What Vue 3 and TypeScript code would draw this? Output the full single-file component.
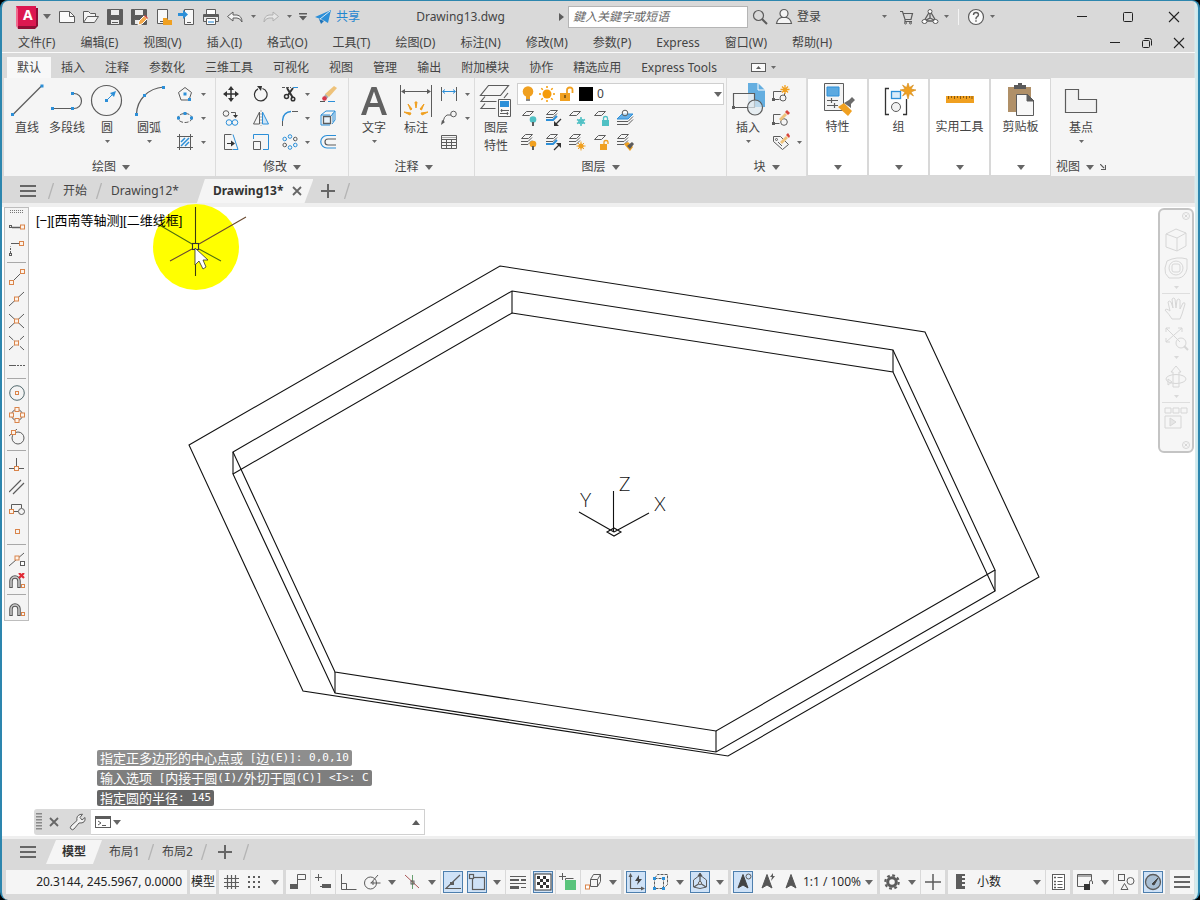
<script setup lang="ts">
import { h, ref } from 'vue'

type IconDef = [number, number, string]

const B = 'stroke="#2c8fd8"'
const bf = 'fill="#2c8fd8" stroke="none"'
const of = 'fill="#f0a020" stroke="none"'
const gf = 'fill="#5c5c5c" stroke="none"'
const tf = 'fill="#4fc0c4" stroke="none"'
const O = 'stroke="#d9844a"'
const sq = (x: number, y: number) => `<rect x="${x - 1.5}" y="${y - 1.5}" width="3" height="3" ${bf}/>`
const osq = (x: number, y: number) => `<rect x="${x - 2}" y="${y - 2}" width="4" height="4" fill="#fdf3ea" ${O}/>`
const sheet = (x: number, y: number, fill = '#f5f5f5', stroke = '#5c5c5c') =>
  `<path d="M${x + 4} ${y}h7l-4 4h-7z" fill="${fill}" stroke="${stroke}"/>`
const stack = sheet(1.5, 1.5) + '<path d="M1 8.500h7l4-4M1 11.500h7l4-4"/>'
const blueStack = sheet(2.5, 1.5) + '<path d="M2 8.500h7l4-4"/><path d="M2 11h7l4-4" stroke="#2c8fd8" stroke-width="2"/>'
const person = '<path d="M9 1.500l5 13.500L9 12l-5 3z" '

const icons: Record<string, IconDef> = {
  caret: [5, 3, '<path d="M0 0h5L2.500 3z" fill="#6a6a6a" stroke="none"/>'],
  caretL: [8, 5, '<path d="M0 0h8L4 5z" fill="#666" stroke="none"/>'],
  caretR: [5, 8, `<path d="M0 0v8l5-4z" ${gf}/>`],
  caretUp: [8, 5, `<path d="M0 5h8L4 0z" ${gf}/>`],
  slash: [8, 16, '<path d="M1.500 16L6.500 0" stroke="#b4b4b4" stroke-width="1.300"/>'],
  logo: [24, 24, '<path d="M3 3h20v18l-3 3H3z" fill="#8f0e35" stroke="none"/><path d="M1 1h20v20H1z" fill="#dc1750" stroke="none"/><path d="M1 1l2 3v20l-2-3z" fill="#f06a8e" stroke="none"/><text x="8" y="15" font-family="Noto Sans, sans-serif" font-size="14" font-weight="700" fill="#fff" stroke="none">A</text>'],
  newFile: [18, 18, '<path d="M1.500 3.500h10l5 5v6h-15z" fill="#fafafa"/><path d="M11.500 3.500v5h5"/>'],
  open: [18, 18, '<path d="M1.500 14.500v-11h5l2 2h5v3M1.500 14.500l4-6h11l-4 6z" fill="#f4f4f4"/>'],
  save: [18, 18, '<path d="M1.500 1.500h15v15h-15z" fill="#5c5c5c"/><path d="M4.500 1.500h9v6h-9zM4.500 11.500h9v5h-9z" fill="#ececec"/><path d="M6 14.500h6"/>'],
  saveAs: [18, 18, '<path d="M1.500 1.500h15v15h-15z" fill="#5c5c5c"/><path d="M4.500 1.500h9v6h-9zM4.500 11.500h9v5h-9z" fill="#ececec"/><path d="M8 17l1-4 5-5 3 3-5 5z" fill="#f5a94a" stroke="#fff"/><path d="M14 8l3 3 1-1-3-3z" fill="#d84a3a" stroke="none"/>'],
  openWeb: [18, 18, `<path d="M3.500 1.500h10v14h-10z" fill="#f8f8f8"/><path d="M6 13.500h3"/><path d="M9 17v-7h4l1 2h4v5z" ${of}/>`],
  saveWeb: [18, 18, `<path d="M6.500 1.500h9v15h-9z" fill="#f8f8f8"/><path d="M9 14.500h4"/><path d="M0 5h5V2l5 4.500L5 11V8H0z" ${bf}/>`],
  print: [18, 18, `<path d="M4.500 6V1.500h9V6" fill="#fff"/><path d="M1.500 6.500h15v7h-15z" fill="#e9e9e9"/><path d="M4.500 10.500h9v6h-9z" fill="#fff"/><path d="M6 13h6v2H6z" fill="#8cc0e8" stroke="none"/><path d="M2 8h14" stroke-width="2"/>`],
  undo: [18, 18, '<path d="M1.500 8.500L7 4v3h4q5 1 5 7q-2-4-5-4H7v3z" fill="#f4f4f4"/>'],
  redo: [18, 18, '<path d="M16.500 8.500L11 4v3H7q-5 1-5 7q2-4 5-4h4v3z" fill="#e6e6e6" stroke="#b0b0b0"/>'],
  custom: [8, 8, `<path d="M0 0h8v1.500H0zM0 3h8L4 7.500z" ${gf}/>`],
  share: [16, 16, `<path d="M0 8L16 1 13 14 8 11z" ${bf}/><path d="M4 10l2 5 3-3z" fill="#1c72b8" stroke="none"/><path d="M5 10L15 2" stroke="#d9eaf6"/>`],
  search: [18, 18, '<circle cx="7.500" cy="7.500" r="5" stroke-width="1.200"/><path d="M11 11l5 5" stroke-width="2"/>'],
  user: [18, 18, '<circle cx="9" cy="5.500" r="4" fill="#f4f4f4" stroke-width="1.200"/><path d="M1.500 15.500q1-5 5-6h5q4 1 5 6z" fill="#f4f4f4" stroke-width="1.200"/>'],
  cart: [18, 18, '<path d="M3 3.500h2.500l2.500 8h6l1.500-6H6M8 11.500v2h7" stroke-width="1.200"/><circle cx="8.500" cy="15" r="1"/><circle cx="13.500" cy="15" r="1"/>'],
  hub: [18, 18, '<path d="M9 3L3 13h12zM9 3v7l-6 3M9 10l6 3" stroke-width="1.300"/><circle cx="9" cy="3.500" r="2" fill="#fff"/><ellipse cx="3.500" cy="13.500" rx="2.500" ry="2" fill="#fff"/><ellipse cx="14.500" cy="13.500" rx="2.500" ry="2" fill="#fff"/>'],
  help: [18, 18, '<circle cx="9" cy="9" r="7.500" fill="#fafafa" stroke-width="1.200"/><path d="M6.500 7q0-2.500 2.500-2.500t2.500 2.200q0 1.300-1.500 2.100-1 .6-1 2v.4M9 12.300v1.400" stroke-width="1.400"/>'],
  min: [12, 12, '<path d="M1 5.500h10" stroke="#222"/>'],
  max: [12, 12, '<rect x="1.500" y="1.500" width="9" height="9" rx="1" stroke="#222"/>'],
  restore: [12, 12, '<rect x="1.500" y="3.500" width="7" height="7" rx="1" stroke="#222"/><path d="M3.500 1.500h5q2 0 2 2v5" stroke="#222"/>'],
  close: [12, 12, '<path d="M1 1l10 10M11 1L1 11" stroke="#222" stroke-width="1.100"/>'],
  ribbonMode: [16, 10, `<rect x=".5" y=".5" width="14" height="8" fill="#fafafa"/><path d="M5 6h5L7.500 3z" ${gf}/>`],
  line: [36, 36, `<path d="M3.500 33L32.500 4" stroke-width="1.200"/>${sq(3.5, 32.5)}${sq(33, 4)}`],
  pline: [36, 36, `<path d="M3.500 26.500h21.500a7.500 7.500 0 0 0 0-15h-2" stroke-width="1.200"/>${sq(3.5, 26.5)}${sq(23.5, 26.5)}${sq(23.5, 11.5)}`],
  circle: [36, 36, `<circle cx="17.500" cy="18.500" r="15" stroke-width="1.200"/>${sq(17.5, 18.5)}<path d="M18 18l6-6" ${B}/><path d="M27 9l-2 6-4-4z" ${bf}/>`],
  arc: [36, 36, `<path d="M5.500 32Q6 21 13.500 13.500 21 6 32.500 5" stroke-width="1.200"/>${sq(5.5, 32.5)}${sq(13.5, 13.5)}${sq(32.5, 5.5)}`],
  polygon: [16, 16, `<path d="M8 1.500l6.500 5-2.500 7.500H4L1.500 6.500z"/>${sq(8, 8)}${sq(12.5, 13.5)}`],
  ellipse: [16, 16, `<ellipse cx="8" cy="8" rx="7" ry="4.500" stroke-dasharray="4 1.500"/>${sq(1.5, 8)}${sq(8, 3.5)}${sq(14.5, 8)}`],
  hatch: [16, 16, `<path d="M2.500 0v16M13.500 0v16M0 2.500h16M0 13.500h16"/><path d="M4 8l4-4M4 12l8-8M8 12l4-4" ${B} stroke-width="1.500"/>`],
  move: [16, 16, '<path d="M8 2v12M2 8h12" stroke="#333" stroke-width="1.500"/><path d="M8 0l3 4H5zM8 16l3-4H5zM0 8l4-3v6zM16 8l-4-3v6z" fill="#333" stroke="none"/>'],
  rotate: [16, 16, '<path d="M9.500 2.500a6.300 6.300 0 1 1-4.500.4" stroke="#333" stroke-width="1.200"/><path d="M4 0h5L8 5z" fill="#333" stroke="none"/>'],
  trim: [16, 16, '<path d="M0 1.500h9" stroke-dasharray="3 1"/><path d="M11 1.500h5" stroke="#2c8fd8"/><path d="M5 2l6 10M11 2L6 9" stroke="#333" stroke-width="2"/><circle cx="4.500" cy="10.500" r="2" stroke="#333" stroke-width="1.500"/><circle cx="11" cy="13" r="1.800" stroke="#333" stroke-width="1.500"/>'],
  erase: [18, 16, '<path d="M15 0l3 2-8 9-4-3z" fill="#eec27a" stroke="none"/><path d="M6.500 8l3 3-2 2-3-2z" fill="#aaa" stroke="none"/><circle cx="5.500" cy="12.500" r="2.300" fill="#d8364a" stroke="none"/><path d="M1 15.500h5" stroke="#555"/><path d="M9 15.500h7" stroke="#2c8fd8"/>'],
  copy: [18, 16, `<circle cx="4" cy="3.500" r="2.800"/><path d="M9 2.500h4.500v4"/><path d="M11 5h5l-2.500 3z" fill="#333" stroke="none"/><circle cx="7" cy="12.500" r="2.800" ${B}/><circle cx="13" cy="12.500" r="2.800" ${B}/>`],
  mirror: [16, 16, `<path d="M6.500 2v12h-6z"/><path d="M9.500 2v12h6z" fill="#cfe5f6" ${B}/><path d="M8 0v16" stroke="#aaa" stroke-dasharray="2 1"/>`],
  fillet: [16, 16, `<path d="M.5 16V11"/><path d="M.5 11Q1 2 9 1.500" ${B} stroke-width="1.300"/><path d="M10 1.500h6"/>`],
  explode: [18, 16, `<path d="M4.500 6.500h7v7h-7z" fill="#e8f2fa" stroke-width="1.300"/><path d="M2 5l5-4h9v9l-3 4M12 6l4-5M2 5h9M2 5v10h9M14 3v9" ${B}/>`],
  stretch: [18, 16, `<path d="M9.500.5h-7v15h8"/><path d="M11 .5l5 15h-5" ${B}/><path d="M5 9.500h6" stroke="#333"/><path d="M9 6.500v6l4-3z" fill="#333" stroke="none"/>`],
  scale: [16, 16, `<path d="M.5 7.500h7v8h-7z"/><path d="M.5 5V.5h15v15H10" ${B}/>`],
  array: [16, 16, `<circle cx="8" cy="2.500" r="1.800" ${B}/><circle cx="13.300" cy="5" r="1.800"/><circle cx="13.300" cy="11" r="1.800" ${B}/><circle cx="8" cy="13.500" r="1.800" ${B}/><circle cx="2.700" cy="11" r="1.800"/><circle cx="2.700" cy="5" r="1.800" ${B}/>`],
  offset: [18, 16, `<path d="M17 1.500H8a6 6 0 0 0 0 12.500h9" ${B} stroke-width="1.200"/><path d="M17 5H9a2.700 2.700 0 0 0 0 6h8" stroke-width="1.200"/>`],
  text: [36, 36, '<path d="M5 33L15.500 5h5L31 33h-5l-2.700-8H12.500L10 33zM14 21h8L18 9.500z" fill="#616161" stroke="none" fill-rule="evenodd"/>'],
  dimension: [36, 36, `<path d="M2.500 3v32M33.500 3v32M5 9.500h26"/><path d="M3 9.500l4-2.500v5zM33 9.500l-4-2.500v5z" ${gf}/><path d="M17 20l1 6 1-6zM10 22l4 5-1.500 1zM26 22l-4 5 1.500 1zM6 30l7 1-1 2zM30 30l-7 1 1 2z" fill="#f0a020" stroke="#f0a020"/>`],
  linear: [16, 16, `<path d="M.5 1v14M15.500 1v14"/><path d="M2 5.500h12M4 3.500l-2.500 2L4 7.500M12 3.500l2.500 2-2.500 2" ${B}/>`],
  leader: [16, 16, `<path d="M2 12q1-6 4-7h4"/><circle cx="12.500" cy="4" r="2.800"/><path d="M0 15l1-5 3 2z" ${gf}/>`],
  table: [16, 14, '<path d="M.5.5h15v13H.5zM.5 4.500h15M.5 7.500h15M.5 10.500h15M5.500 4v9.500M10.500 4v9.500"/><path d="M1 2.500h14" stroke="#aaa"/>'],
  layers: [36, 36, `<path d="M10.500 3.500h20l-8 10h-20z" stroke-width="1.200"/><path d="M7 19.500H3l4-5M7 26.500H3l4-5M3.500 19.500h15M3.500 26.500h14M26 16l4-5" stroke-width="1.200"/><path d="M20.500 17.500h12v17h-12z" fill="#f8f8f8"/><path d="M22 19h9v6h-9z" ${bf}/><path d="M23 28.500h8M22 31.500h8M24 27l-1 1.500 1 1.500M29 30l1 1.500-1 1.500"/>`],
  bulb: [14, 18, `<circle cx="7" cy="6.500" r="5.300" ${of}/><path d="M5 11h4v3H5z" ${of}/><path d="M5 14h4v2H5z" fill="#888" stroke="none"/>`],
  sun: [16, 16, '<circle cx="8" cy="8" r="4.500" fill="#f59c0a" stroke="none"/><path d="M8 0v2M8 14v2M0 8h2M14 8h2M2.300 2.300l1.500 1.500M12.200 12.200l1.500 1.500M13.700 2.300l-1.500 1.500M3.800 12.200l-1.500 1.500" stroke="#f59c0a" stroke-width="1.500"/>'],
  unlock: [16, 16, '<path d="M1 7h10v8H1z" fill="#f0a020" stroke="none"/><path d="M8 7V4q0-2.500 2.800-2.500T13.500 4v3" stroke="#f0a020" stroke-width="1.800"/><path d="M6 9v3" stroke="#6b4a10" stroke-width="1.500"/>'],
  layOff: [18, 18, `${sheet(2.5, 2.5)}<circle cx="13" cy="10.500" r="3.300" ${tf}/><path d="M12 13h2v4h-2z" ${gf}/>`],
  layIso: [18, 18, `${blueStack}<path d="M17 10l-5 5" stroke="#333" stroke-width="1.300"/><path d="M10 17v-5l5 5z" fill="#333" stroke="none"/>`],
  layFreeze: [18, 18, `${sheet(1.5, 2.5)}<circle cx="13" cy="12.500" r="2.500" stroke="#4fc0c4"/><path d="M13 8v9M9 10.500l8 4M17 10.500l-8 4" stroke="#4fc0c4" stroke-width="1.500"/>`],
  layLock: [18, 18, `${sheet(2.5, 2.5)}<path d="M10 11h7v6h-7z" ${tf}/><path d="M11.500 11v-2q0-1.500 2-1.500t2 1.500v2" stroke="#4fc0c4" stroke-width="1.300"/>`],
  layCurrent: [18, 18, '<path d="M6 5h11l-5 5H1z" fill="#64aee6" stroke="#2c8fd8"/><path d="M1 12.500h11l5-5M1 15.500h11l5-5"/><circle cx="9" cy="4" r="2.800" fill="#fff" fill-opacity=".6"/>'],
  layOn: [18, 18, `${stack}<circle cx="13" cy="11" r="3.300" ${of}/><path d="M12 13h2v4h-2z" ${gf}/>`],
  layUniso: [18, 18, `${blueStack}<path d="M10 17l5-5" stroke="#333" stroke-width="1.300"/><path d="M17 10v5l-5-5z" fill="#333" stroke="none"/>`],
  layThaw: [18, 18, `${stack}<circle cx="13" cy="13" r="2.600" ${of}/><path d="M13 8.500v9M8.500 13h9M10 10l6 6M16 10l-6 6" stroke="#f0a020"/>`],
  layUnlock: [18, 18, `${sheet(2.5, 2.5)}<path d="M8 11h7v6H8z" ${of}/><path d="M12 11v-2q0-1.500 2-1.500t2 1.500v2" stroke="#f0a020" stroke-width="1.300"/>`],
  layMatch: [18, 18, `${stack}<path d="M8 11l4-2 5 5-3 4z" ${of}/><path d="M11 13l5-4 2 2-4 5z" ${gf}/>`],
  insert: [36, 36, `<path d="M18 1h10l7 7v17H18z" fill="#64aee0" stroke="none"/><path d="M28 1v7h7" stroke="#fff"/><path d="M3.500 11.500h21v14h-21z" fill="#f5f5f5" fill-opacity=".85" stroke-width="1.200"/><circle cx="25" cy="25.500" r="7.500" fill="#dfe9f0" fill-opacity=".7" stroke-width="1.200"/><path d="M2 24h3v3H2z" ${gf}/>`],
  blkCreate: [18, 18, `<path d="M1.500 14.500v-8h8M1.500 14.500h6M12.500 8v2"/><circle cx="11" cy="13" r="3"/><path d="M13 0v9M8.500 4.500h9M10 1.500l6 6M16 1.500l-6 6" stroke="#f0a020" stroke-width="1.300"/><path d="M0 13h3v3H0z" ${gf}/>`],
  blkEdit: [18, 18, `<path d="M1.500 14.500v-9h7M1.500 14.500h6"/><circle cx="12" cy="13" r="3.300"/><path d="M7 10l6-6 2 2-6 6z" fill="#eec27a" stroke="none"/><path d="M13 3l2-2 3 3-2 2z" fill="#d8453a" stroke="none"/><path d="M0 13h3v3H0z" ${gf}/>`],
  blkAttr: [18, 18, '<path d="M1.500 3.500h7l8 8-6 5-9-8z" fill="#f5f5f5"/><circle cx="4.500" cy="6.500" r="1"/><path d="M6 9l4 4" /><path d="M8 9l6-6 2 2-6 6z" fill="#eec27a" stroke="none"/><path d="M14 2l2-2 2 3-1 2z" fill="#d8453a" stroke="none"/>'],
  props: [36, 36, `<path d="M4.500 2.500h19v27h-19z" fill="#f4f4f4"/><path d="M7 6h12v9H7z" fill="#5ba9e0" stroke="#2c8fd8"/><path d="M7 19.500h11M7 24.500h11M11.500 17v5M14.500 22v5" stroke-width="1.200"/><path d="M18 26l6-4 8 8-4 5z" ${of}/><path d="M24 22l5-3 3-3 3 3-4 4v4z" fill="#6b6b6b" stroke="none"/>`],
  group: [36, 36, '<path d="M8 7.500H4.500v26H8M22 33.500h3.500V18" stroke-width="1.300" stroke="#333"/><rect x="10.500" y="10.500" width="9" height="7" fill="#d9ecfa" stroke="#2c8fd8" stroke-width="1.300"/><circle cx="15" cy="26" r="4.500" fill="#f2f2f2"/><path d="M27 2l1.500 4.500L32.500 4l-2.500 4 5 1-5 2 2.500 4-4-2.500L27 18l-1.500-5.500-4 2.500 2.500-4-5-2 5-1-2.500-4 4 2.500z" fill="#f0a020" stroke="#d08818" stroke-width=".6"/>'],
  ruler: [36, 36, '<path d="M4 15h28v7H4z" fill="#f0a020" stroke="none"/><path d="M6.500 15v3M9.500 15v2M12.500 15v3M15.500 15v2M18.500 15v3M21.500 15v2M24.500 15v3M27.500 15v2M30 15v3" stroke="#8a5a10"/>'],
  paste: [36, 36, '<path d="M5 6h23v25H5z" fill="#b09068" stroke="none"/><path d="M11 4h4V2h4v2h4v4H11z" fill="#5a5a5a" stroke="none"/><path d="M13.500 13.500h11l6 6v15h-17z" fill="#f8f8f8"/><path d="M24 13v7h7z" fill="#5c5c5c" stroke="#5c5c5c"/>'],
  base: [36, 36, '<path d="M2.500 7.500h13v10h18v13h-31z" fill="#f2f2f2" stroke-width="1.200"/>'],
  launcher: [6, 6, '<path d="M0 0l4 4M5.500 1v4.500H1" stroke-width="1.200"/>'],
  burger: [16, 14, '<path d="M0 2h16M0 7h16M0 12h16" stroke="#666" stroke-width="2"/>'],
  plus: [14, 14, '<path d="M7 0v14M0 7h14" stroke="#666" stroke-width="2"/>'],
  x: [10, 10, '<path d="M1 1l8 8M9 1L1 9" stroke="#666" stroke-width="1.800"/>'],
  sTrack: [16, 16, `<rect x=".5" y="6.500" width="2" height="2"/><path d="M3 8.500h8" stroke-width="1.300"/>${osq(13.5, 8)}`],
  sFrom: [16, 16, `<path d="M1.500 12V5.500" stroke-dasharray="2 1"/><path d="M2 2.500h9"/><rect x=".5" y="12.500" width="2" height="2"/>${osq(12.5, 2.5)}`],
  sEnd: [16, 16, `<path d="M3 13L13 3"/>${osq(2.5, 13.5)}${osq(13.5, 2.5)}`],
  sMid: [16, 16, `<path d="M0 15L15 1"/>${osq(7.5, 8)}`],
  sInt: [16, 16, `<path d="M0 1l15 14M0 15L15 1"/>${osq(7.5, 8)}`],
  sApp: [16, 16, `<path d="M0 1l15 14M0 15L15 1" stroke-dasharray="6 1.500"/>${osq(7.5, 8)}`],
  sExt: [16, 16, '<path d="M0 8.500h7"/><path d="M8 8.500h8" stroke-dasharray="2 1"/>'],
  sCen: [16, 16, `<circle cx="8" cy="8" r="7.300" stroke="#52696d"/><rect x="6.500" y="6.500" width="3" height="3" ${O}/>`],
  sQua: [16, 16, `<circle cx="8" cy="8" r="5.500"/>${osq(8, 2.5)}${osq(2.5, 8)}${osq(13.5, 8)}${osq(8, 13.5)}`],
  sTan: [16, 16, `<path d="M0 7L8 0"/><circle cx="9" cy="9" r="6"/>${osq(4.5, 3.5)}`],
  sPer: [16, 16, `<path d="M7.500 1v10M0 11.500h15"/>${osq(7.5, 11.5)}`],
  sPar: [16, 16, '<path d="M0 13L12 1M4 15L15 4" stroke-width="1.200"/>'],
  sIns: [16, 16, `<path d="M2.500 9V3.500h10V7M4 10.500h5"/><circle cx="12.500" cy="10.500" r="3"/>${osq(2.5, 10.5)}`],
  sNode: [16, 16, `<rect x="6.500" y="6.500" width="4" height="4" ${O}/>`],
  sNear: [16, 16, `<path d="M0 15L15 2"/><rect x="11.500" y="10.500" width="4" height="4" fill="#fff"/>${osq(8, 7)}`],
  sNone: [16, 16, '<path d="M2 15V8a4 4 0 0 1 8 0v7" stroke="#555" stroke-width="3.500"/><path d="M2 14V8a4 4 0 0 1 8 0v6" stroke="#ccc" stroke-width="1.500"/><path d="M10 0l5 5M15 0l-5 5" stroke="#e02a35" stroke-width="2.200"/><rect x="12.500" y="11.500" width="3" height="3" stroke="#d9844a"/>'],
  sOpt: [16, 16, '<path d="M2 15V8a4 4 0 0 1 8 0v7" stroke="#555" stroke-width="3.500"/><path d="M2 14V8a4 4 0 0 1 8 0v6" stroke="#ccc" stroke-width="1.500"/><rect x="12.500" y="11.500" width="3" height="3" stroke="#d9844a"/>'],
  nCube: [24, 24, '<path d="M12 1l10 4v13l-9 5-11-4V6zM2 6l11 4 9-5M13 10v13"/>'],
  nWheel: [24, 24, '<path d="M3 5q10-5 20-2v10q-2 8-8 9H5Q0 18 1 12z"/><circle cx="12" cy="12" r="7"/><rect x="8" y="8" width="8" height="8" rx="2"/>'],
  nHand: [24, 24, '<path d="M8 22q-3-5-7-9 1-2 5 1l-2-9q1-2 3 0l2 6-1-9q2-2 3 0l1 9 1-8q2-2 3 0v9l3-6q2-1 2 1l-3 10-2 5z"/>'],
  nZoom: [26, 26, '<path d="M3 3l14 14M19 3L3 17M3 7V3h4M15 3h4v4M3 13v4h4"/><circle cx="18" cy="18" r="5"/><path d="M21 21l4 4" stroke-width="2"/>'],
  nOrbit: [24, 24, '<ellipse cx="12" cy="14" rx="10" ry="4.500"/><path d="M9 22V7H7l5-6 5 6h-2v15zM4 14l4 3-4 3z"/>'],
  nMotion: [24, 24, '<path d="M1 2h6v5H1zM9 2h6v5H9zM17 2h6v5h-6zM1 10h16v12H1z"/><path d="M6 12v8l6-4z" fill="#aaa"/>'],
  nClose: [8, 8, '<circle cx="4" cy="4" r="3.500"/><path d="M2.500 2.500l3 3M5.500 2.500l-3 3"/>'],
  wrench: [18, 18, '<path d="M2 16q-1.500-1 0-3l6-5.500Q7 3 11 1.500l2.500-.3L11 4.500l2 2.500 3-2.500q1 6-6 5.500L5 16q-1.500 1.500-3 0z" fill="#f2f2f2"/>'],
  prompt: [17, 13, `<rect x=".5" y=".5" width="15" height="11" fill="#fff"/><path d="M0 0h16v3H0z" ${gf}/><path d="M3 5l3 2-3 2M7 9.500h4"/>`],
  grip: [6, 18, '<path d="M1 0v18M5 0v18M3 0v18" stroke="#555" stroke-width="1.200" stroke-dasharray="1.500 1.500"/>'],
  gripH: [14, 4, '<path d="M0 .5h14M0 2.500h14" stroke="#777" stroke-dasharray="1 1"/>'],
  grid: [18, 18, '<path d="M5.500 2v14M9.500 2v14M13.500 2v14M2 5.500h15M2 9.500h15M2 13.500h15" stroke-width="1.200"/>'],
  dots: [18, 18, '<path d="M2 4h14M2 9h14M2 14h14" stroke-width="2" stroke-dasharray="2 3"/>'],
  infer: [18, 18, `<path d="M8.500 12V1.500h8v5h-8"/><path d="M1 11h8v5H1z" ${gf}/>`],
  dyn: [18, 18, `<path d="M4.500 1v7M1 4.500h7M6 13.500h10"/><path d="M8 11h9v4H8z" ${gf}/>`],
  ortho: [18, 18, '<path d="M2.500 1v15.500h15M2.500 10.500h5v6"/>'],
  polar: [18, 18, '<circle cx="7.500" cy="10" r="6"/><path d="M7.500 10h10M8 10L15 2M10 8v4"/>'],
  iso: [18, 18, '<path d="M9.500 2v14" stroke="#6aa070"/><path d="M2 2l14 13" stroke="#a55"/><rect x="8" y="8" width="3" height="3"/>'],
  otrack: [18, 18, `<path d="M16 2L2 15.500h15" stroke-width="1.200"/><path d="M6 9h4v3H6z" ${gf}/>`],
  osnap: [18, 18, '<rect x="4.500" y="4.500" width="12" height="12" stroke-width="1.200"/><rect x="1.500" y="1.500" width="4" height="4" fill="#d3e5f8" stroke-width="1.200"/>'],
  lineweight: [18, 18, '<path d="M1 3.500h16M1 10.500h16"/><path d="M1 7h9M12 7h5" stroke-width="2"/><path d="M1 14.500h9" stroke-width="3"/><path d="M12 14.500h5"/>'],
  transp: [18, 18, '<rect x="1" y="1" width="16" height="16" stroke="#333" fill="#fff"/><path d="M3 4.500h12M3 10.500h12" stroke="#333" stroke-width="3" stroke-dasharray="3 3"/><path d="M6 7.500h9M6 13.500h9" stroke="#333" stroke-width="3" stroke-dasharray="3 3"/>'],
  cycle: [18, 18, '<path d="M3.500 0v7M0 3.500h7M6.500 8V5.500h8"/><path d="M6 7h11v10H6z" fill="#5ac47c" stroke="none"/>'],
  osnap3d: [18, 18, `<path d="M6.500 6.500h7v7h-7zM6.500 6.500l3-5h7l-3 5M16.500 1.500v7l-3 5"/><rect x="1.500" y="12" width="4" height="4" fill="#fff" ${O}/>`],
  ducs: [18, 18, `<path d="M3.500 3v12.500H16" stroke-width="1.200"/><path d="M3.500 0l2 4h-4zM18 15.500l-4-2v4z" ${gf}/><path d="M12 2l-4 6h3l-1 4 5-6h-3z" fill="#444" stroke="none"/>`],
  filter: [18, 18, `<path d="M3.500 5.500h9v10h-9zM3.500 5.500l3-4h10v10l-4 4" stroke-dasharray="3 1"/>${sq(3.5, 5.5)}${sq(12.5, 5.5)}${sq(3.5, 15.5)}${sq(12.5, 15.5)}`],
  gizmo: [18, 18, '<path d="M9 2v8l-6 4M9 10l6 4" stroke-width="1.300"/><path d="M9 2L2.500 7v7q6.500 3 13 0V7z"/><circle cx="9" cy="10" r="1.500" fill="#fff"/><path d="M7 3l2-3 2 3z" fill="#444"/>'],
  ann1: [18, 18, `${person} fill="#444" stroke="#444"/><circle cx="14.500" cy="3.500" r="2.500"/>`],
  ann2: [18, 18, `${person} fill="#555" stroke="#555"/><path d="M15 0l-3 4h2l-1 4 4-5h-2z" ${gf}/>`],
  ann3: [18, 18, `${person} fill="#555" stroke="#555"/>`],
  gear: [18, 18, '<circle cx="9" cy="9" r="4.300" stroke-width="3"/><circle cx="9" cy="9" r="6.700" stroke-width="2.200" stroke-dasharray="2.800 2.460"/>'],
  plusS: [18, 18, '<path d="M9 1v16M1 9h16" stroke-width="1.500"/>'],
  units: [18, 18, `<path d="M5 1h9v2h-3v2h3v2h-3v2h3v2h-3v2h3v3H5z" ${gf}/>`],
  qprops: [18, 18, '<rect x="3.500" y="1.500" width="12" height="15" fill="#fff"/><path d="M5 4.500h2M5 8.500h2M5 11.500h2M5 14.500h2" stroke-width="1.500"/><path d="M8.500 4.500h5M8.500 8.500h5M8.500 11.500h5M8.500 14.500h5"/>'],
  lockUi: [18, 18, '<path d="M8 13.500H1.500v-12h14V7M1.500 3h14"/><path d="M8 11h6v6H8z" fill="#333" stroke="none"/><path d="M13.500 11V9q0-1.500 1.500-1.500T16.500 9v2"/>'],
  isolate: [18, 18, '<rect x="1.500" y="1.500" width="6" height="6"/><circle cx="13.500" cy="8" r="3.500"/><path d="M7.500 10.500l3.500 6H4z"/>'],
  perf: [18, 18, '<circle cx="9" cy="9" r="7.500" fill="#a9bfd4" stroke-width="1.300"/><path d="M8 11l6-6-4 7z" fill="#444" stroke="#444"/>'],
}

const Icon = (p: { n: string }) => {
  const [w, ht, body] = icons[p.n]
  return h('svg', {
    width: w, height: ht, viewBox: `0 0 ${w} ${ht}`, fill: 'none', stroke: '#5c5c5c',
    'aria-hidden': 'true', class: 'icon', innerHTML: body,
  })
}
Icon.props = ['n']

const menus = ['文件(F)', '编辑(E)', '视图(V)', '插入(I)', '格式(O)', '工具(T)', '绘图(D)', '标注(N)', '修改(M)', '参数(P)', 'Express', '窗口(W)', '帮助(H)']
const ribbonTabs = ['默认', '插入', '注释', '参数化', '三维工具', '可视化', '视图', '管理', '输出', '附加模块', '协作', '精选应用', 'Express Tools']
const quick = ['newFile', 'open', 'save', 'saveAs', 'openWeb', 'saveWeb', 'print', 'undo']
const modify = [
  ['move', 'rotate', 'trim', 'erase'],
  ['copy', 'mirror', 'fillet', 'explode'],
  ['stretch', 'scale', 'array', 'offset'],
]
const layerTools = [
  ['layOff', 'layIso', 'layFreeze', 'layLock', 'layCurrent'],
  ['layOn', 'layUniso', 'layThaw', 'layUnlock', 'layMatch'],
]
const folded = [
  { icon: 'props', label: '特性' },
  { icon: 'group', label: '组' },
  { icon: 'ruler', label: '实用工具' },
  { icon: 'paste', label: '剪贴板' },
]
const snaps = [
  ['sTrack', 'sFrom'],
  ['sEnd', 'sMid', 'sInt', 'sApp', 'sExt'],
  ['sCen', 'sQua', 'sTan'],
  ['sPer', 'sPar', 'sIns', 'sNode'],
  ['sNear', 'sNone'],
  ['sOpt'],
]
const history = ['指定正多边形的中心点或 [边(E)]: 0,0,10', '输入选项 [内接于圆(I)/外切于圆(C)] <I>: C', '指定圆的半径: 145']
const pieces = (s: string) => s.match(/[\u4e00-\u9fff]+|[^\u4e00-\u9fff]+/g) ?? []
const isLatin = (s: string) => !/[\u4e00-\u9fff]/.test(s)

const command = ref('')
const layer = ref('0')
const unit = ref('小数')
const keyword = ref('')

// Each group is a list of cells; "v" is a drop-down arrow and a leading "*" marks a tool that is on.
const toolsLeft = [
  [['grid', 'dots', 'v']],
  [['infer'], ['dyn'], ['ortho', 'polar', 'v', 'iso', 'v'], ['*otrack', '*osnap', 'v'], ['lineweight'], ['*transp'], ['cycle'], ['osnap3d', 'v']],
  [['*ducs', 'filter', 'v', '*gizmo', 'v']],
]
</script>

<template>
  <div class="window">
    <header class="title-bar">
      <button class="btn logo" aria-label="应用程序菜单"><Icon n="logo" /></button>
      <button class="btn c16" aria-label="应用程序列表"><Icon n="caretL" /></button>
      <button v-for="q in quick" :key="q" class="btn c24" :aria-label="q"><Icon :n="q" /></button>
      <button class="btn c12" aria-label="放弃列表"><Icon n="caret" /></button>
      <button class="btn c24" aria-label="重做"><Icon n="redo" /></button>
      <button class="btn c12" aria-label="重做列表"><Icon n="caret" /></button>
      <button class="btn c16" aria-label="自定义快速访问"><Icon n="custom" /></button>
      <button class="btn share"><Icon n="share" /><span>共享</span></button>
      <h1 class="doc-title">Drawing13.dwg</h1>
      <button class="btn c12" aria-label="展开搜索"><Icon n="caretR" /></button>
      <input v-model="keyword" class="search" type="search" placeholder="鍵入关鍵字或短语" aria-label="搜索">
      <button class="btn c24" aria-label="搜索"><Icon n="search" /></button>
      <button class="btn login"><Icon n="user" /><span>登录</span></button>
      <button class="btn c8 login-caret" aria-label="登录选项"><Icon n="caret" /></button>
      <button class="btn c24" aria-label="应用商店"><Icon n="cart" /></button>
      <button class="btn c24" aria-label="Autodesk"><Icon n="hub" /></button>
      <button class="btn c8" aria-label="Autodesk 选项"><Icon n="caret" /></button>
      <span class="divider"></span>
      <button class="btn c24" aria-label="帮助"><Icon n="help" /></button>
      <button class="btn c8" aria-label="帮助选项"><Icon n="caret" /></button>
      <div class="win-btns">
        <button class="btn" aria-label="最小化"><Icon n="min" /></button>
        <button class="btn" aria-label="最大化"><Icon n="max" /></button>
        <button class="btn" aria-label="关闭"><Icon n="close" /></button>
      </div>
    </header>

    <nav class="menu-bar">
      <button v-for="m in menus" :key="m" class="btn menu">{{ m }}</button>
      <div class="doc-btns">
        <button class="btn" aria-label="最小化图形"><Icon n="min" /></button>
        <button class="btn" aria-label="还原图形"><Icon n="restore" /></button>
        <button class="btn" aria-label="关闭图形"><Icon n="close" /></button>
      </div>
    </nav>

    <nav class="ribbon-tabs">
      <button v-for="(t, i) in ribbonTabs" :key="t" class="btn rtab" :class="{ on: i === 0 }">{{ t }}</button>
      <button class="btn mode" aria-label="最小化功能区"><Icon n="ribbonMode" /><Icon n="caret" /></button>
    </nav>

    <div class="ribbon">
      <section class="panel draw">
        <div class="body">
          <button class="btn big w40"><Icon n="line" /><span>直线</span></button>
          <button class="btn big w40"><Icon n="pline" /><span>多段线</span></button>
          <button class="btn big w40"><Icon n="circle" /><span>圆</span><Icon n="caret" /></button>
          <button class="btn big w44"><Icon n="arc" /><span>圆弧</span><Icon n="caret" /></button>
          <div class="small-col">
            <div v-for="s in ['polygon', 'ellipse', 'hatch']" :key="s" class="small-row">
              <button class="btn c24" :aria-label="s"><Icon :n="s" /></button>
              <button class="btn c12" :aria-label="s + ' 选项'"><Icon n="caret" /></button>
            </div>
          </div>
        </div>
        <button class="btn foot">绘图<Icon n="caretL" /></button>
      </section>

      <section class="panel modify">
        <div class="body">
          <div class="small-col">
            <div v-for="r in modify" :key="r[0]" class="mod-row">
              <button class="btn" :aria-label="r[0]"><Icon :n="r[0]" /></button>
              <button class="btn" :aria-label="r[1]"><Icon :n="r[1]" /></button>
              <button class="btn" :aria-label="r[2]"><Icon :n="r[2]" /></button>
              <button class="btn" :aria-label="r[2] + ' 选项'"><Icon n="caret" /></button>
              <button class="btn" :aria-label="r[3]"><Icon :n="r[3]" /></button>
            </div>
          </div>
        </div>
        <button class="btn foot">修改<Icon n="caretL" /></button>
      </section>

      <section class="panel annotate">
        <div class="body">
          <button class="btn big w42"><Icon n="text" /><span>文字</span><Icon n="caret" /></button>
          <button class="btn big w42"><Icon n="dimension" /><span>标注</span></button>
          <div class="small-col">
            <div v-for="s in ['linear', 'leader', 'table']" :key="s" class="small-row">
              <button class="btn c24" :aria-label="s"><Icon :n="s" /></button>
              <button v-if="s !== 'table'" class="btn c12" :aria-label="s + ' 选项'"><Icon n="caret" /></button>
            </div>
          </div>
        </div>
        <button class="btn foot">注释<Icon n="caretL" /></button>
      </section>

      <section class="panel layer">
        <div class="body">
          <button class="btn big w42"><Icon n="layers" /><span>图层</span><span class="second">特性</span></button>
          <div class="layer-col">
            <label class="combo">
              <Icon n="bulb" /><Icon n="sun" /><Icon n="unlock" /><i class="swatch"></i>
              <select v-model="layer" aria-label="图层"><option>0</option></select>
              <Icon n="caretL" />
            </label>
            <div v-for="r in layerTools" :key="r[0]" class="small-row">
              <button v-for="n in r" :key="n" class="btn c24" :aria-label="n"><Icon :n="n" /></button>
            </div>
          </div>
        </div>
        <button class="btn foot">图层<Icon n="caretL" /></button>
      </section>

      <section class="panel block">
        <div class="body">
          <button class="btn big w42"><Icon n="insert" /><span>插入</span><Icon n="caret" /></button>
          <div class="small-col">
            <div v-for="s in ['blkCreate', 'blkEdit', 'blkAttr']" :key="s" class="small-row">
              <button class="btn c24" :aria-label="s"><Icon :n="s" /></button>
              <button v-if="s === 'blkAttr'" class="btn c12" aria-label="属性选项"><Icon n="caret" /></button>
            </div>
          </div>
        </div>
        <button class="btn foot">块<Icon n="caretL" /></button>
      </section>

      <button v-for="f in folded" :key="f.label" class="btn folded">
        <Icon :n="f.icon" /><span>{{ f.label }}</span><Icon n="caretL" />
      </button>

      <section class="panel view">
        <div class="body">
          <button class="btn big w60"><Icon n="base" /><span>基点</span><Icon n="caret" /></button>
        </div>
        <button class="btn foot start">视图<Icon n="caretL" /><Icon n="launcher" /></button>
      </section>
    </div>

    <nav class="file-tabs">
      <button class="btn burger" aria-label="文件选项卡菜单"><Icon n="burger" /></button>
      <Icon n="slash" />
      <button class="btn ftab">开始</button>
      <Icon n="slash" />
      <button class="btn ftab">Drawing12*</button>
      <div class="active-tab">
        <button class="btn strong">Drawing13*</button>
        <button class="btn c16" aria-label="关闭选项卡"><Icon n="x" /></button>
      </div>
      <button class="btn add" aria-label="新图形"><Icon n="plus" /></button>
      <Icon n="slash" />
    </nav>

    <main class="canvas">
      <svg class="drawing" viewBox="2 207 1193 629" preserveAspectRatio="xMidYMid meet" fill="none" stroke="#111" stroke-width="1.100">
        <circle cx="196" cy="247" r="43" fill="#ffff00" stroke="none" />
        <path d="M500 266L925 332 1039 577 728 756 303 691 189 445z" />
        <path d="M512 291L893 350 995 570 716 731 335 672 233 452z" />
        <path d="M512 313L893 372 995 591 716 752 335 693 233 474z" />
        <path d="M512 291v22M893 350v22M995 570v21M716 731v21M335 672v21M233 452v22" />
        <path d="M613.500 491v41M614 532l35-19M614 532l-35-20M607 532l7-4 7 4-7 4z" />
        <g class="axis" fill="#111" stroke="none">
          <text x="580" y="507">Y</text>
          <text x="619" y="491">Z</text>
          <text x="654" y="511">X</text>
        </g>
        <path d="M195.500 207v36M195.500 250v26" stroke="#3c3c10" />
        <path d="M246 217l-47 27M192 249l-22 12" stroke="#6b4a30" />
        <path d="M156 223l36 21M199 249l22 12" stroke="#4f6f10" />
        <rect x="192.500" y="243.500" width="6" height="6" stroke="#333" />
        <path d="M195 248v17l4-4 4 8 3-2-3-7h5z" fill="#fff" stroke="#333" stroke-width=".8" />
      </svg>

      <aside class="snap-bar">
        <div class="snap-grip"><Icon n="gripH" /></div>
        <div v-for="(g, i) in snaps" :key="i" class="snap-group">
          <button v-for="s in g" :key="s" class="btn snap" :aria-label="s"><Icon :n="s" /></button>
        </div>
      </aside>

      <div class="stage">
        <p class="view-label">[−][西南等轴测][二维线框]</p>
        <div class="command-area">
          <p v-for="(l, i) in history" :key="l" class="hist" :class="'h' + i"><span v-for="(s, j) in pieces(l)" :key="j" :class="{ mono: isLatin(s) }">{{ s }}</span></p>
          <div class="command">
            <div class="cmd-tools">
              <Icon n="grip" />
              <button class="btn c24" aria-label="关闭命令行"><Icon n="x" /></button>
              <button class="btn c24" aria-label="自定义"><Icon n="wrench" /></button>
            </div>
            <div class="cmd-input">
              <button class="btn recent" aria-label="最近使用的命令"><Icon n="prompt" /><Icon n="caretL" /></button>
              <input v-model="command" type="text" aria-label="命令">
              <button class="btn c16" aria-label="展开历史"><Icon n="caretUp" /></button>
            </div>
          </div>
        </div>
      </div>

      <aside class="nav-bar">
        <button class="btn corner" aria-label="关闭导航栏"><Icon n="nClose" /></button>
        <button class="btn n28" aria-label="ViewCube"><Icon n="nCube" /></button>
        <button class="btn n28" aria-label="控制盘"><Icon n="nWheel" /></button>
        <button class="btn n12" aria-label="控制盘选项"><Icon n="caret" /></button>
        <hr>
        <button class="btn n30" aria-label="平移"><Icon n="nHand" /></button>
        <button class="btn n28" aria-label="缩放"><Icon n="nZoom" /></button>
        <button class="btn n12" aria-label="缩放选项"><Icon n="caret" /></button>
        <button class="btn n28" aria-label="动态观察"><Icon n="nOrbit" /></button>
        <button class="btn n12" aria-label="动态观察选项"><Icon n="caret" /></button>
        <hr>
        <button class="btn n30" aria-label="ShowMotion"><Icon n="nMotion" /></button>
        <button class="btn corner low" aria-label="导航栏设置"><Icon n="nClose" /></button>
      </aside>
    </main>

    <nav class="layout-tabs">
      <button class="btn burger" aria-label="布局菜单"><Icon n="burger" /></button>
      <button class="btn model strong">模型</button>
      <button class="btn ltab">布局1</button>
      <Icon n="slash" />
      <button class="btn ltab">布局2</button>
      <Icon n="slash" />
      <button class="btn add-layout" aria-label="新建布局"><Icon n="plus" /></button>
      <Icon n="slash" />
    </nav>

    <footer class="status">
      <div class="group coords">20.3144, 245.5967, 0.0000</div>
      <div class="group"><button class="btn space">模型</button></div>
      <div v-for="(g, gi) in toolsLeft" :key="gi" class="group">
        <div v-for="(c, ci) in g" :key="ci" class="cell">
          <template v-for="(t, ti) in c" :key="ti">
            <button v-if="t === 'v'" class="btn c16" aria-label="选项"><Icon n="caretL" /></button>
            <button v-else class="btn tool" :class="{ on: t[0] === '*' }" :aria-label="t.replace('*', '')"><Icon :n="t.replace('*', '')" /></button>
          </template>
        </div>
      </div>
      <div class="group"><div class="cell">
        <button class="btn tool on" aria-label="注释可见性"><Icon n="ann1" /></button>
        <button class="btn tool" aria-label="自动缩放"><Icon n="ann2" /></button>
        <button class="btn tool" aria-label="注释比例"><Icon n="ann3" /></button>
        <button class="btn ratio">1:1 / 100%</button>
        <button class="btn c16" aria-label="比例选项"><Icon n="caretL" /></button>
      </div></div>
      <div class="group">
        <div class="cell">
          <button class="btn tool" aria-label="切换工作空间"><Icon n="gear" /></button>
          <button class="btn c16" aria-label="工作空间选项"><Icon n="caretL" /></button>
        </div>
        <div class="cell"><button class="btn tool" aria-label="注释监视器"><Icon n="plusS" /></button></div>
      </div>
      <div class="group">
        <label class="cell units">
          <span class="unit-icon"><Icon n="units" /></span>
          <select v-model="unit" aria-label="单位"><option>小数</option></select>
          <span class="unit-caret"><Icon n="caretL" /></span>
        </label>
        <div class="cell"><button class="btn tool" aria-label="快捷特性"><Icon n="qprops" /></button></div>
      </div>
      <div class="group">
        <div class="cell">
          <button class="btn tool" aria-label="锁定用户界面"><Icon n="lockUi" /></button>
          <button class="btn c16" aria-label="锁定选项"><Icon n="caretL" /></button>
        </div>
        <div class="cell"><button class="btn tool" aria-label="隔离对象"><Icon n="isolate" /></button></div>
      </div>
      <div class="group"><div class="cell"><button class="btn tool on" aria-label="图形性能"><Icon n="perf" /></button></div></div>
      <div class="group last"><div class="cell"><button class="btn tool" aria-label="自定义"><Icon n="burger" /></button></div></div>
    </footer>
  </div>
</template>

<style>
html, body { margin: 0; background: #000; }
</style>

<style scoped>
.window {
  box-sizing: border-box;
  display: flex;
  flex-direction: column;
  min-height: 100vh;
  padding-right: 3px;
  border: 2px solid #2d86ae;
  border-top-width: 1px;
  border-bottom: 0;
  border-radius: 8px;
  overflow: hidden;
  background: linear-gradient(to left, #c4e6ec 0, #d9ecee 3px, #d9d9d9 4px);
  font: 12px/20px "Noto Sans", "Noto Sans CJK SC", sans-serif;
  color: #444;
}
.btn {
  display: flex;
  align-items: center;
  justify-content: center;
  flex: none;
  box-sizing: border-box;
  margin: 0;
  padding: 0;
  border: 0;
  background: none;
  color: inherit;
  font: inherit;
  white-space: nowrap;
}
.icon { display: block; flex: none; }
.c8 { width: 8px; }
.c12 { width: 12px; }
.c16 { width: 16px; }
.c24 { width: 24px; }
.btn.strong { font-weight: 700; color: #333; }

.title-bar { display: flex; align-items: center; height: 31px; margin-right: -3px; }
.logo { width: 24px; margin-left: 13px; }
.btn.share { gap: 5px; padding-left: 4px; color: #1f86d0; }
.doc-title { flex: 1; margin: 0; padding-left: 5px; font-size: 12px; font-weight: 400; text-align: center; }
.search {
  box-sizing: border-box; width: 180px; height: 22px; padding: 0 4px;
  border: 1px solid #b5b5b5; background: #fff; font: inherit; font-style: italic;
}
.search::placeholder { color: #666; opacity: 1; }
.btn.login { gap: 4px; padding-left: 3px; margin-right: 59px; }
.btn.login-caret { margin-right: 6px; }
.divider { width: 1px; height: 16px; margin: 0 5px 0 8px; background: #f4f4f4; }
.win-btns { display: flex; margin-left: 63px; margin-right: 1px; }
.win-btns .btn { width: 46px; height: 24px; }

.menu-bar { display: flex; gap: 25px; box-sizing: border-box; height: 21px; padding: 1px 0 0 16px; border-bottom: 1px solid #fafafa; }
.doc-btns { display: flex; margin-left: auto; }
.doc-btns .btn { width: 32px; }

.ribbon-tabs { display: flex; height: 25px; padding: 4px 0 0 5px; box-sizing: border-box; }
.rtab { padding: 0 10px; height: 21px; }
.rtab.on { background: #f8f8f8; }
.btn.mode { gap: 4px; margin-left: 24px; }

.ribbon { display: flex; height: 98px; margin-left: 2px; background: #f5f5f5; }
.panel { display: flex; flex-direction: column; box-sizing: border-box; flex: none; border-right: 1px solid #dcdcdc; }
.body { display: flex; flex: 1; padding-top: 4px; }
.foot { gap: 6px; height: 20px; padding-top: 2px; }
.foot.start { justify-content: flex-start; padding-left: 5px; }
.draw { width: 212px; padding-left: 3px; }
.modify { width: 133px; }
.annotate { width: 126px; padding-left: 4px; }
.layer { width: 252px; }
.block { width: 80px; }
.view { flex: 1; border-right: 0; }
.big { flex-direction: column; justify-content: flex-start; align-self: flex-start; }
.w40 { width: 40px; }
.w42 { width: 42px; }
.w44 { width: 44px; }
.w60 { width: 60px; }
.big .icon + span { height: 20px; }
.big .icon:last-child { margin-top: 2px; }
.second { line-height: 16px; }
.small-row { display: flex; height: 24px; }
.draw .small-row { padding-left: 2px; }
.mod-row { display: grid; grid-template-columns: 30px 30px 28px 6px 36px; height: 24px; }
.layer-col { flex: 1; margin-right: 2px; }
.combo {
  display: flex; align-items: center; gap: 4px; box-sizing: border-box;
  height: 22px; margin: 1px 0; padding: 0 1px 0 3px; border: 1px solid #cfcfcf; background: #fff;
}
.swatch { width: 14px; height: 14px; background: #000; }
select { flex: 1; min-width: 0; padding: 0; border: 0; outline: 0; appearance: none; background: none; color: inherit; font: inherit; }
.folded {
  flex-direction: column; justify-content: flex-start; width: 61px; padding: 2px 0 5px;
  border: 1px solid #d8d8d8; background: #fff;
}
.btn.folded { padding: 2px 0 5px; border: 1px solid #d8d8d8; background: #fff; }
.folded .icon:last-child { margin-top: auto; }

.file-tabs { display: flex; align-items: center; box-sizing: border-box; height: 31px; padding: 2px 0 0 7px; border-bottom: 4px solid #efefef; }
.burger { width: 38px; }
.btn.ftab { padding: 0 8px; }
.active-tab {
  display: flex; align-items: center; align-self: flex-end; gap: 6px; height: 24px;
  margin-left: 10px; padding: 0 8px 0 16px; background: #f5f5f5;
  clip-path: polygon(8px 0, 100% 0, calc(100% - 9px) 100%, 0 100%);
}
.add { width: 30px; }

.canvas { position: relative; display: flex; flex: 1; background: #fff; border-bottom: 3px solid #efefef; }
.drawing { position: absolute; inset: 0; width: 100%; height: 100%; overflow: visible; }
.axis { font: 300 19px Lato, "Liberation Sans", sans-serif; }
.snap-bar {
  position: relative; align-self: flex-start; box-sizing: border-box; width: 25px; margin-left: 2px;
  border: 1px solid #bdbdbd; background: #f4f4f4;
}
.snap-grip { display: flex; justify-content: center; height: 8px; padding-top: 2px; box-sizing: border-box; }
.snap { width: 100%; height: 22px; }
.snap-group + .snap-group { padding-top: 6px; background: linear-gradient(#a8a8a8, #a8a8a8) 2px 2px / 19px 1px no-repeat; }
.stage { position: relative; display: flex; flex: 1; flex-direction: column; justify-content: space-between; }
.view-label { margin: 4px 0 0 7px; font: 13px/20px "Liberation Sans", "Noto Sans CJK SC", sans-serif; color: #000; }
.command-area { width: 391px; margin-left: 5px; }
.hist {
  display: flex; width: max-content; height: 16px; margin: 0 0 4px 63px; padding: 0 3px; border-radius: 2px;
  background: #8e8e8e; color: #fff; font-size: 13px; line-height: 16px; white-space: pre;
}
.h1 { background: #7e7e7e; }
.h2 { background: #666; margin-bottom: 3px; }
.mono { font: 11px/16px "DejaVu Sans Mono", monospace; }
.command { display: flex; height: 26px; margin-bottom: 1px; }
.cmd-tools { display: flex; align-items: center; width: 57px; padding-left: 2px; box-sizing: border-box; background: #dadada; border-radius: 3px 0 0 3px; }
.cmd-input { display: flex; flex: 1; align-items: center; box-sizing: border-box; border: 1px solid #d0d0d0; border-left: 0; background: #fff; }
.cmd-input input { flex: 1; min-width: 0; border: 0; outline: 0; background: none; font: inherit; }
.btn.recent { gap: 1px; padding-left: 4px; }
.nav-bar {
  position: relative; display: flex; flex-direction: column; align-items: center; align-self: flex-start;
  box-sizing: border-box; width: 36px; height: 245px; margin: 1px 1px 0 0; border: 2px solid #c4c4c4; border-radius: 6px; background: #f6f6f6;
}
.nav-bar .btn { opacity: 0.2; }
.nav-bar hr { width: 28px; height: 1px; margin: 0; border: 0; background: #dedede; }
.n28 { height: 28px; }
.n30 { height: 30px; }
.n12 { height: 11px; }
.corner { align-self: flex-end; height: 12px; margin-right: 2px; }
.nav-bar .corner + .n28 { margin-top: 4px; }
.btn.low { margin-top: auto; }

.layout-tabs { display: flex; align-items: center; height: 26px; padding-left: 7px; }
.btn.model { height: 24px; padding: 0 16px; margin-left: -1px; background: #f5f5f5; clip-path: polygon(10px 0, 100% 0, calc(100% - 9px) 100%, 0 100%); }
.btn.ltab { padding: 0 7px; }
.add-layout { width: 34px; }

.status { display: flex; gap: 3px; height: 24px; margin: 5px 1px 6px 4px; color: #222; }
.group { display: flex; gap: 1px; flex: none; }
.group.last { margin-left: 2px; }
.cell, .coords { display: flex; align-items: center; background: #f5f5f5; }
.group.coords { flex: 1; justify-content: flex-end; padding-right: 5px; }
.btn.space { width: 26px; background: #f5f5f5; }
.btn.tool { width: 20px; height: 22px; margin: 0 2px; }
.btn.tool.on { border: 1px solid #4d7fae; background: #cfe2f7; }
.btn.ratio { width: 58px; font-family: "Open Sans", sans-serif; }
.units select { width: 57px; flex: none; padding-left: 5px; box-sizing: border-box; }
.unit-icon { width: 24px; display: flex; justify-content: center; }
.unit-caret { width: 16px; display: flex; justify-content: center; }
</style>
